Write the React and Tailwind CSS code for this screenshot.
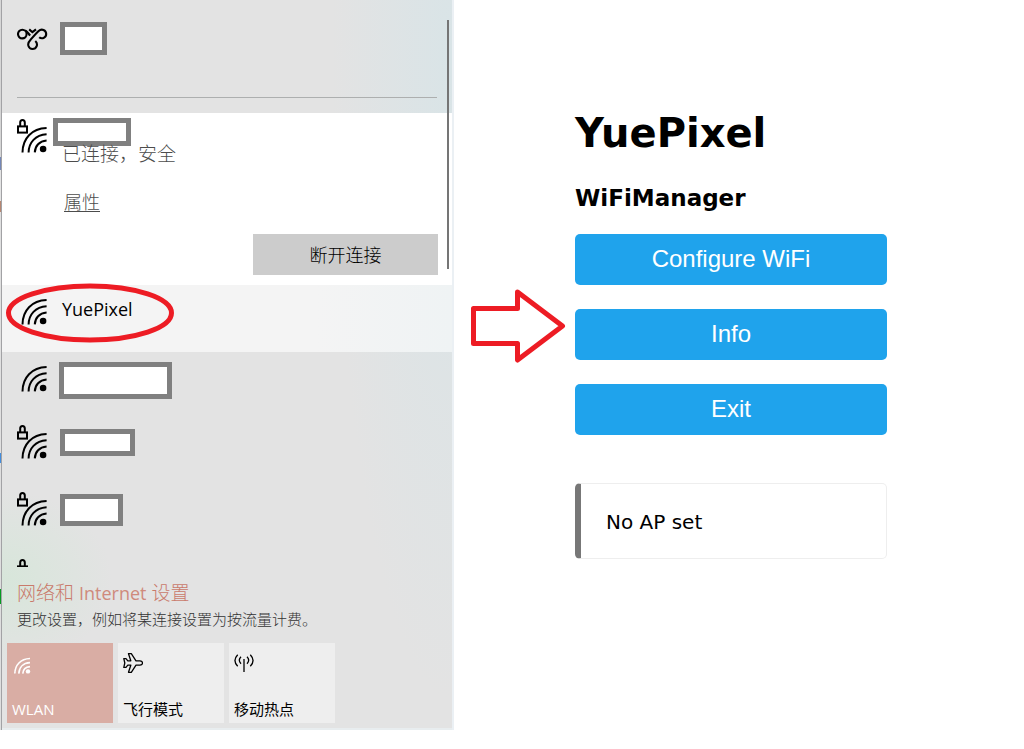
import React from "react";

function NetworkIcon({ locked }) {
  return (
    <svg className="ml-[15px] mt-[5px] h-10 w-8 shrink-0" viewBox="0 0 32 40" fill="none" stroke="#000" aria-hidden="true">
      {locked && (
        <g strokeWidth="2">
          <rect x="1" y="8.4" width="9" height="6.2" />
          <path d="M3.2 8.4V4.6a2.3 2.5 0 0 1 4.6 0V8.4" />
        </g>
      )}
      <g strokeWidth="2">
        <path d="M5.5 34.4C5.7 20.6 14.6 10.6 29.6 10.1" />
        <path d="M11.6 34.4C11.8 24.4 18.4 17 29.6 16.3" />
        <path d="M17.8 34.4C18 27.9 22.4 23 29.6 22.5" />
      </g>
      <circle cx="26.1" cy="31" r="3.3" fill="#000" stroke="none" />
    </svg>
  );
}

function VpnIcon() {
  return (
    <svg className="ml-[15px] mt-7 h-[23px] w-8 shrink-0" viewBox="0 0 32 23" fill="none" stroke="#000" strokeWidth="2.1" aria-hidden="true">
      <circle cx="5.3" cy="6.1" r="4.3" />
      <path d="M8.2 2.4C10 3 11.2 5.6 13.2 7.6" />
      <path d="M12.2 1.4l3.2 2.8 3.6-2.8" />
      <path d="M22.2 9.2C24.6 11.4 29.2 10 29.2 6.1C29.2 2 24.6.2 21.6 3C18.5 5.8 16 9 13.2 12.2C9.4 16 11.6 21 15.5 21C19.6 21 21.6 16 18.3 13" />
    </svg>
  );
}

function Blank({ className }) {
  return <span className={`block border-[5px] border-[#808080] bg-white ${className}`} />;
}

function Tile({ label, active, children }) {
  return (
    <button
      type="button"
      className={`flex h-20 w-[106px] flex-col items-start justify-between pb-px pl-[5px] pt-2 text-[15px] leading-[26px] ${
        active ? "bg-[#d9ada4] text-white" : "bg-[#eeeeee] text-black"
      }`}
    >
      {children}
      <span>{label}</span>
    </button>
  );
}

function WifiPanel() {
  return (
    <aside className="relative flex w-[454px] shrink-0 border-r-2 border-[#ebf0f4] font-['Open_Sans','Noto_Sans_CJK_SC',sans-serif]">
      <div className="w-px bg-[linear-gradient(#d6d6d6_0_157px,#7487b7_157px_170px,#e4e4e4_170px_201px,#b68671_201px_212px,#e0e0e0_212px_453px,#438ddd_453px_463px,#dedede_463px_589px,#079b22_589px_604px,#dedede_604px)]" />
      <div className="min-w-0 flex-1 border-l border-[#a2a2a5] bg-[radial-gradient(ellipse_110px_90px_at_0_580px,#d7e6da,transparent),radial-gradient(ellipse_120px_640px_at_100%_60px,#d9e4e7,transparent),linear-gradient(#e3e3e3,#e3e3e3)]">
        <div className="flex h-[97px]">
          <VpnIcon />
          <Blank className="ml-[11px] mt-[22px] h-[33px] w-[47px]" />
        </div>
        <hr className="mb-[15px] ml-[15px] mr-[15px] border-[#adafaf]" />

        <ul>
          <li className="flex h-[172px] bg-white">
            <NetworkIcon locked />
            <div className="flex min-w-0 flex-1 flex-col items-start pr-[14px] pt-[5px] text-[18px] font-light leading-6 text-[#4c4c4c]">
              <Blank className="ml-1 h-7 w-[78px] shrink-0" />
              <p className="-mt-1 ml-[13px] text-[19px]">已连接，安全</p>
              <a href="#properties" className="ml-[15px] mt-6 underline underline-offset-2">属性</a>
              <button type="button" className="mt-5 h-[41px] w-[185px] self-end bg-[#cccccc] text-black">断开连接</button>
            </div>
          </li>
          <li className="flex h-[67px] bg-[linear-gradient(90deg,#f4f4f4_70%,#eff3f4)]">
            <NetworkIcon />
            <span className="ml-[13px] mt-3 text-[18px] leading-6 text-black">YuePixel</span>
          </li>
          <li className="flex h-[67px]">
            <NetworkIcon />
            <Blank className="ml-[10px] mt-[10px] h-[37px] w-[113px]" />
          </li>
          <li className="flex h-[67px]">
            <NetworkIcon locked />
            <Blank className="ml-[11px] mt-[10px] h-[27px] w-[75px]" />
          </li>
          <li className="flex h-[67px]">
            <NetworkIcon locked />
            <Blank className="ml-[11px] mt-2 h-8 w-[63px]" />
          </li>
          <li className="flex h-[14px] overflow-hidden">
            <NetworkIcon locked />
          </li>
        </ul>

        <div className="pl-[15px] pt-[13px]">
          <a href="#settings" className="block text-[19px] font-light leading-[26px] text-[#c97a6b]">
            网络和 <span className="text-[18px] font-normal text-[#cf8a7c]">Internet</span> 设置
          </a>
          <p className="text-[15px] font-light leading-[26px] text-[#333333]">更改设置，例如将某连接设置为按流量计费。</p>
        </div>

        <div className="mt-[11px] flex gap-[5px] pb-[5px] pl-[5px]">
          <Tile label="WLAN" active>
            <svg className="ml-0.5 mt-1.5 size-[18px]" viewBox="0 0 18 18" fill="none" stroke="#fff" strokeWidth="1.6" aria-hidden="true">
              <path d="M.8 16.6C1 8 6.5 1.8 16 1.5M4.8 16.6C5 10.5 9 6 16 5.6M8.8 16.6C9 12.8 11.5 10 16 9.6" />
              <circle cx="14" cy="14.4" r="2.2" fill="#fff" stroke="none" />
            </svg>
          </Tile>
          <Tile label="飞行模式">
            <svg className="mt-0.5 size-5" viewBox="0 0 20 20" fill="none" stroke="#000" strokeWidth="1.3" strokeLinejoin="round" aria-hidden="true">
              <path d="M5.5 .7H8.3L13 7.8H17C20.4 8.2 20.4 11.8 17 12.2H13L8.3 19.3H5.5L7.8 12.2H4.8L3 14.4H.8L1.8 10L.8 5.6H3L4.8 7.8H7.8Z" />
            </svg>
          </Tile>
          <Tile label="移动热点">
            <svg className="mt-0.5 size-5" viewBox="0 0 20 20" fill="none" stroke="#000" strokeWidth="1.3" aria-hidden="true">
              <path d="M10 6V19M3.7 1.7Q-1.8 7.5 3.7 13.3M7 3.7Q3.6 7 7 10.8M13 3.7Q16.4 7 13 10.8M16.3 1.7Q21.8 7.5 16.3 13.3" />
            </svg>
          </Tile>
        </div>
        <div className="h-0.5 bg-[#e8edef]" />
      </div>

      <span className="absolute right-[3px] top-5 h-[249px] w-0.5 bg-[#757575]" />
      <svg className="absolute left-[5px] top-[283px] h-[60px] w-[170px]" viewBox="0 0 170 60" fill="none" aria-hidden="true">
        <ellipse cx="85" cy="30" rx="81.5" ry="27" stroke="#ed1c24" strokeWidth="5" />
      </svg>
    </aside>
  );
}

function ManagerButton({ children }) {
  return (
    <button type="button" className="h-[51px] w-full rounded-[5px] bg-[#1fa3ec] pb-px font-['Liberation_Sans',Arial,sans-serif] text-[24px] text-white">
      {children}
    </button>
  );
}

export default function App() {
  return (
    <main className="flex min-h-screen items-start bg-white">
      <WifiPanel />
      <svg className="ml-[17px] mt-[289px] h-[75px] w-[95px] shrink-0" viewBox="0 0 95 75" fill="none" aria-hidden="true">
        <path d="M2.5 19.5H46.5V3L91.5 37L46.5 71V54.5H2.5Z" stroke="#ed1c24" strokeWidth="5" strokeLinejoin="round" />
      </svg>
      <section className="ml-[9px] max-w-[312px] flex-1 pt-[108px] font-['DejaVu_Sans',Verdana,sans-serif] text-black">
        <h1 className="text-[40px] font-bold leading-[50px]">YuePixel</h1>
        <h2 className="mt-[26px] text-[23px] font-bold leading-7">WiFiManager</h2>
        <div className="mt-[22px] flex flex-col gap-6">
          <ManagerButton>Configure WiFi</ManagerButton>
          <ManagerButton>Info</ManagerButton>
          <ManagerButton>Exit</ManagerButton>
        </div>
        <p className="mt-12 rounded-[5px] border border-l-[6px] border-[#eeeeee] border-l-[#777777] pb-[22px] pl-[25px] pt-6 text-[20px] leading-7">
          No AP set
        </p>
      </section>
    </main>
  );
}
